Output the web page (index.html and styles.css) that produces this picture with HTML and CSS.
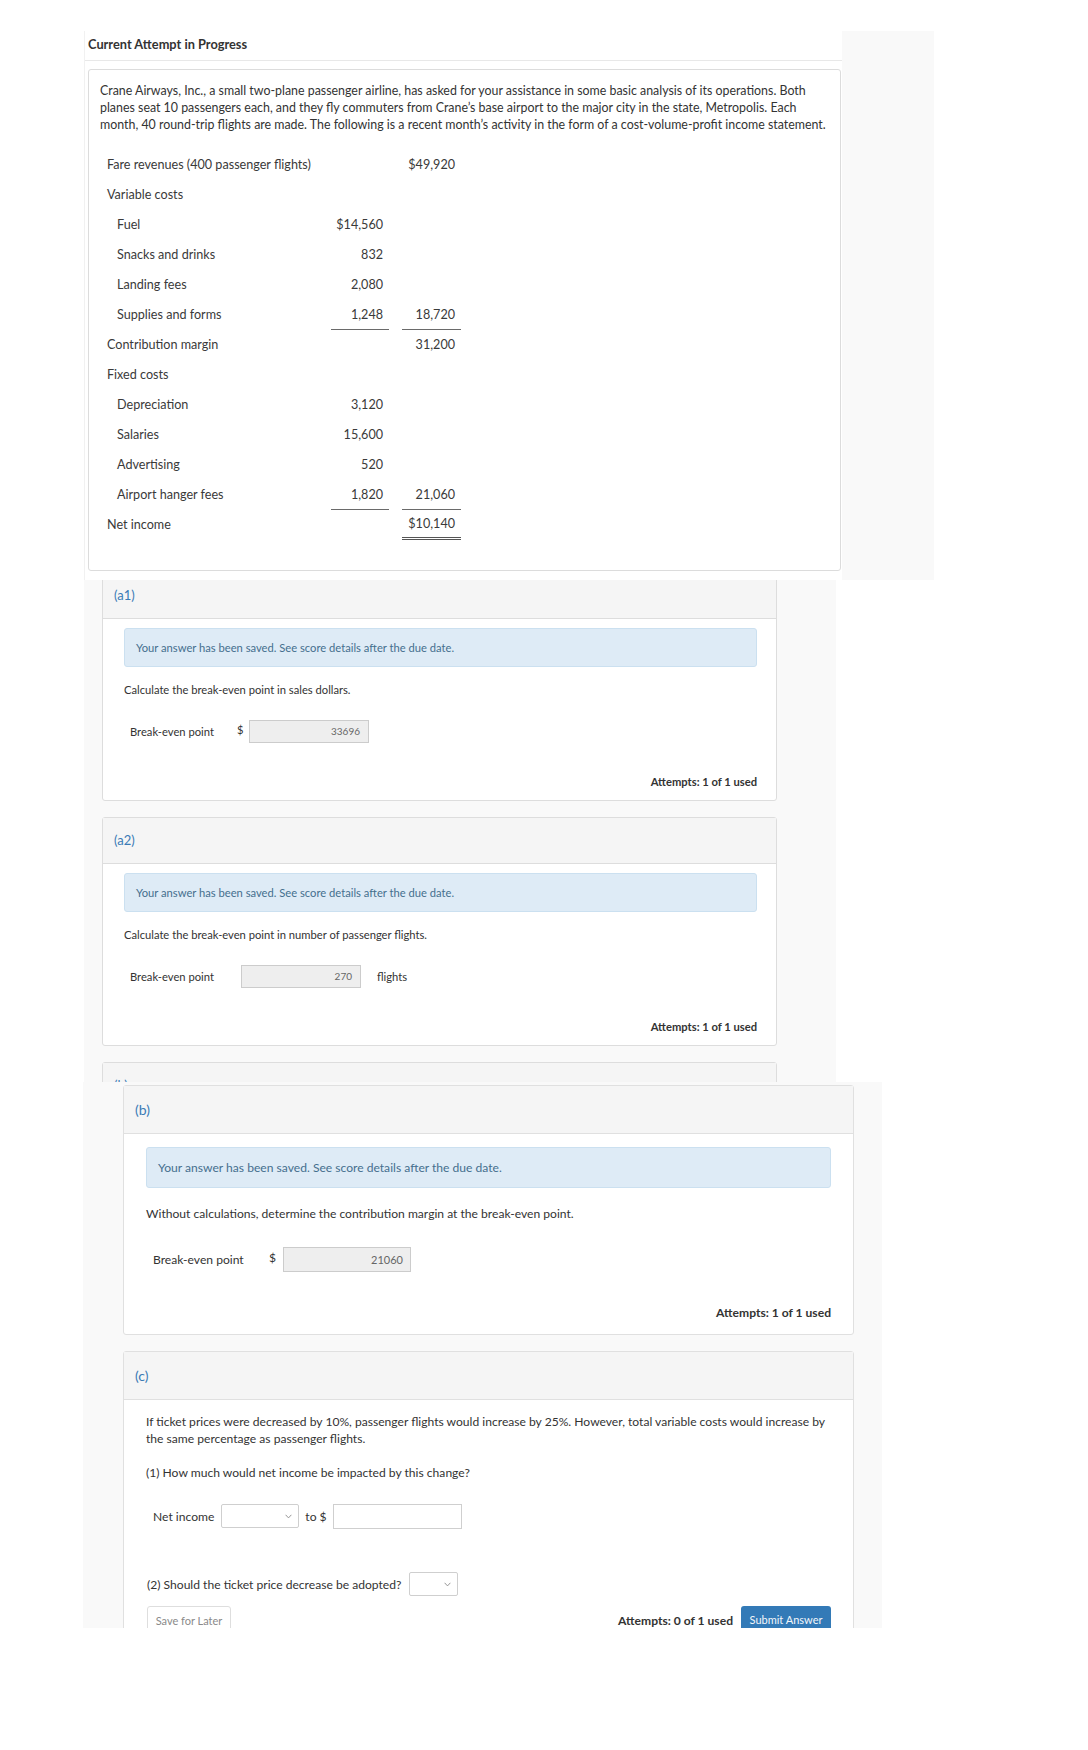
FILE: index.html
```html
<!DOCTYPE html>
<html lang="en">
<head>
<meta charset="utf-8">
<title>Current Attempt in Progress</title>
<link rel="stylesheet" href="styles.css">
</head>
<body>
<div class="page">

  <section class="shot shot1">
    <div class="main">
      <div class="attempt-head">Current Attempt in Progress</div>
      <div class="problem">
        <p class="intro">Crane Airways, Inc., a small two-plane passenger airline, has asked for your assistance in some basic analysis of its operations. Both planes seat 10 passengers each, and they fly commuters from Crane’s base airport to the major city in the state, Metropolis. Each month, 40 round-trip flights are made. The following is a recent month’s activity in the form of a cost-volume-profit income statement.</p>
        <div class="cvp">
          <div>Fare revenues (400 passenger flights)</div><div class="num"></div><div class="num">$49,920</div>
          <div>Variable costs</div><div class="num"></div><div class="num"></div>
          <div class="ind">Fuel</div><div class="num">$14,560</div><div class="num"></div>
          <div class="ind">Snacks and drinks</div><div class="num">832</div><div class="num"></div>
          <div class="ind">Landing fees</div><div class="num">2,080</div><div class="num"></div>
          <div class="ind">Supplies and forms</div><div class="num rule">1,248</div><div class="num rule">18,720</div>
          <div>Contribution margin</div><div class="num"></div><div class="num">31,200</div>
          <div>Fixed costs</div><div class="num"></div><div class="num"></div>
          <div class="ind">Depreciation</div><div class="num">3,120</div><div class="num"></div>
          <div class="ind">Salaries</div><div class="num">15,600</div><div class="num"></div>
          <div class="ind">Advertising</div><div class="num">520</div><div class="num"></div>
          <div class="ind">Airport hanger fees</div><div class="num rule">1,820</div><div class="num rule">21,060</div>
          <div>Net income</div><div class="num"></div><div class="num dbl">$10,140</div>
        </div>
      </div>
    </div>
    <div class="side"></div>
  </section>

  <section class="shot shot2">
    <div class="card2 first">
      <div class="hd">(a1)</div>
      <div class="bd">
        <div class="alert2">Your answer has been saved. See score details after the due date.</div>
        <div class="q2">Calculate the break-even point in sales dollars.</div>
        <div class="row2">
          <span class="lbl2">Break-even point</span>
          <span class="cur2">$</span>
          <span class="inp2 w-a1">33696</span>
        </div>
        <div class="att2">Attempts: 1 of 1 used</div>
      </div>
    </div>
    <div class="card2">
      <div class="hd">(a2)</div>
      <div class="bd">
        <div class="alert2">Your answer has been saved. See score details after the due date.</div>
        <div class="q2">Calculate the break-even point in number of passenger flights.</div>
        <div class="row2">
          <span class="lbl2">Break-even point</span>
          <span class="inp2 w-a2">270</span>
          <span class="unit2">flights</span>
        </div>
        <div class="att2">Attempts: 1 of 1 used</div>
      </div>
    </div>
    <div class="card2">
      <div class="hd">(b)</div>
    </div>
  </section>

  <section class="shot shot3">
    <div class="card3">
      <div class="hd">(b)</div>
      <div class="bd">
        <div class="alert3">Your answer has been saved. See score details after the due date.</div>
        <div class="q3">Without calculations, determine the contribution margin at the break-even point.</div>
        <div class="row3 be">
          <span class="lbl3">Break-even point</span>
          <span class="cur3">$</span>
          <span class="inp3 w-b">21060</span>
        </div>
        <div class="att3">Attempts: 1 of 1 used</div>
      </div>
    </div>
    <div class="card3 gap">
      <div class="hd">(c)</div>
      <div class="bd">
        <p class="para3">If ticket prices were decreased by 10%, passenger flights would increase by 25%. However, total variable costs would increase by the same percentage as passenger flights.</p>
        <p class="sub3">(1) How much would net income be impacted by this change?</p>
        <div class="row3 ni">
          <span class="lbl-ni">Net income</span>
          <span class="sel sel-ni"><svg width="7" height="5" viewBox="0 0 7 5"><path d="M0.6 0.8 L3.5 3.9 L6.4 0.8" fill="none" stroke="#8a8a8a" stroke-width="0.9"/></svg></span>
          <span class="to3">to $</span>
          <span class="txt3"></span>
        </div>
        <div class="row3 adopt">
          <span>(2) Should the ticket price decrease be adopted?</span>
          <span class="sel sel-ad"><svg width="7" height="5" viewBox="0 0 7 5"><path d="M0.6 0.8 L3.5 3.9 L6.4 0.8" fill="none" stroke="#8a8a8a" stroke-width="0.9"/></svg></span>
        </div>
        <div class="foot3">
          <span class="btn-save">Save for Later</span>
          <span class="foot-right">
            <span class="att-inline">Attempts: 0 of 1 used</span>
            <span class="btn-submit">Submit Answer</span>
          </span>
        </div>
      </div>
    </div>
  </section>

</div>
</body>
</html>
```

FILE: styles.css
```css
html, body {
  margin: 0;
  padding: 0;
  background: #ffffff;
}

body {
  font-family: Lato, "Liberation Sans", Arial, sans-serif;
  color: #333333;
}

.page {
  padding-top: 31px;
  height: 1719px;
}

/* ---------- screenshot 1 ---------- */
.shot1 {
  display: flex;
  margin-left: 84px;
  width: 850px;
  height: 549px;
}

.main {
  width: 758px;
  border-left: 1px solid #f1f1f1;
  box-sizing: border-box;
}

.attempt-head {
  height: 30px;
  box-sizing: border-box;
  padding: 5px 0 0 3px;
  line-height: 17px;
  font-size: 12.8px;
  font-weight: 700;
  color: #333;
  border-bottom: 1px solid #e8e8e8;
}

.problem {
  margin: 8px 1px 0 3px;
  height: 502px;
  box-sizing: border-box;
  border: 1px solid #dcdcdc;
  border-radius: 3px;
  padding: 12px 11px;
}

.intro {
  margin: 0;
  font-size: 12.4px;
  line-height: 17px;
  color: #333;
}

.cvp {
  display: grid;
  grid-template-columns: 211px 58px 59px;
  column-gap: 13px;
  margin: 17px 0 0 7px;
  font-size: 12.6px;
  color: #3a3a3a;
}

.cvp > div {
  height: 30px;
  line-height: 30px;
  box-sizing: border-box;
  white-space: nowrap;
}

.cvp .ind {
  padding-left: 10px;
}

.cvp .num {
  text-align: right;
  padding-right: 6px;
}

.cvp .rule {
  border-bottom: 1px solid #6a6a6a;
  line-height: 29px;
}

.cvp .dbl {
  border-bottom: 3px double #555;
  line-height: 27px;
}

.side {
  width: 92px;
  background: #f9f9f9;
}

/* ---------- screenshot 2 ---------- */
.shot2 {
  margin-left: 84px;
  width: 752px;
  height: 502px;
  overflow: hidden;
  background: #f9f9f9;
  padding-left: 18px;
  box-sizing: border-box;
}

.card2 {
  width: 675px;
  background: #fff;
  border: 1px solid #dddddd;
  border-radius: 3px;
  margin-bottom: 16px;
  box-sizing: border-box;
}

.card2.first {
  margin-top: -8px;
}

.card2 .hd {
  height: 45px;
  line-height: 45px;
  background: #f5f5f5;
  border-bottom: 1px solid #dddddd;
  padding-left: 11px;
  font-size: 13px;
  color: #3a7bb5;
}

.card2 .bd {
  padding: 9px 19px 10px 21px;
  font-size: 11.2px;
}

.alert2 {
  height: 39px;
  box-sizing: border-box;
  line-height: 37px;
  padding: 0 11px;
  background: #deebf6;
  border: 1px solid #cbe0f0;
  border-radius: 3px;
  color: #456f8e;
}

.q2 {
  margin-top: 15px;
  line-height: 16px;
}

.row2 {
  margin-top: 22px;
  height: 23px;
  display: flex;
  align-items: center;
  padding-left: 6px;
}

.lbl2 {
  width: 107px;
}

.cur2 {
  width: 12px;
  margin-bottom: 4px;
}

.inp2 {
  height: 23px;
  box-sizing: border-box;
  line-height: 21px;
  background: #eeeeee;
  border: 1px solid #cccccc;
  text-align: right;
  padding-right: 8px;
  font-size: 10px;
  color: #666;
}

.w-a1 { width: 120px; }
.w-a2 { width: 120px; margin-left: 4px; }

.unit2 {
  margin-left: 16px;
}

.att2 {
  margin-top: 31px;
  line-height: 16px;
  text-align: right;
  font-weight: 700;
}

/* ---------- screenshot 3 ---------- */
.shot3 {
  margin-left: 83px;
  width: 799px;
  height: 546px;
  overflow: hidden;
  background: #f9f9f9;
  padding: 3px 0 0 40px;
  box-sizing: border-box;
}

.card3 {
  width: 731px;
  background: #fff;
  border: 1px solid #e0e0e0;
  border-radius: 3px;
  box-sizing: border-box;
}

.card3.gap {
  margin-top: 16px;
}

.card3 .hd {
  height: 47px;
  line-height: 47px;
  background: #f5f5f5;
  border-bottom: 1px solid #e0e0e0;
  padding-left: 11px;
  font-size: 14px;
  color: #3a7bb5;
}

.card3 .bd {
  padding: 13px 22px 12px 22px;
  font-size: 12.1px;
}

.alert3 {
  height: 41px;
  box-sizing: border-box;
  line-height: 39px;
  padding: 0 11px;
  background: #deebf6;
  border: 1px solid #cbe0f0;
  border-radius: 3px;
  color: #456f8e;
}

.q3 {
  margin-top: 17px;
  line-height: 18px;
}

.row3 {
  display: flex;
  align-items: center;
  padding-left: 7px;
}

.row3.be {
  margin-top: 24px;
  height: 25px;
}

.lbl3 {
  width: 116px;
}

.cur3 {
  width: 14px;
  margin-bottom: 4px;
}

.inp3 {
  height: 25px;
  box-sizing: border-box;
  line-height: 23px;
  background: #eeeeee;
  border: 1px solid #cccccc;
  text-align: right;
  padding-right: 7px;
  font-size: 11px;
  color: #666;
}

.w-b { width: 128px; }

.att3 {
  margin-top: 32px;
  line-height: 18px;
  text-align: right;
  font-weight: 700;
}

.para3 {
  margin: 0;
  line-height: 17px;
}

.sub3 {
  margin: 17px 0 0;
  line-height: 17px;
}

.row3.ni {
  margin-top: 23px;
  height: 24px;
}

.lbl-ni {
  margin-right: 7px;
}

.sel {
  height: 24px;
  box-sizing: border-box;
  border: 1px solid #cfcfcf;
  border-radius: 2px;
  background: #fff;
  display: flex;
  align-items: center;
  justify-content: flex-end;
  padding-right: 6px;
}

.sel svg {
  display: block;
}

.sel-ni { width: 78px; }
.sel-ad { width: 49px; margin-left: 8px; }

.to3 {
  margin: 0 6px;
}

.txt3 {
  width: 129px;
  height: 25px;
  box-sizing: border-box;
  border: 1px solid #cfcfcf;
  background: #fff;
}

.row3.adopt {
  margin-top: 44px;
  height: 24px;
  padding-left: 1px;
}

.foot3 {
  margin-top: 10px;
  display: flex;
  justify-content: space-between;
  align-items: center;
  padding-left: 1px;
}

.btn-save {
  height: 28px;
  width: 84px;
  box-sizing: border-box;
  line-height: 28px;
  text-align: center;
  border: 1px solid #dedede;
  border-radius: 3px;
  font-size: 11px;
  color: #8a8a8a;
  background: #fff;
}

.foot-right {
  display: flex;
  align-items: center;
}

.att-inline {
  font-weight: 700;
  margin-right: 8px;
}

.btn-submit {
  height: 28px;
  width: 90px;
  box-sizing: border-box;
  line-height: 28px;
  text-align: center;
  background: #337ab7;
  border-radius: 3px;
  font-size: 11px;
  color: #f2f6fa;
}
```
